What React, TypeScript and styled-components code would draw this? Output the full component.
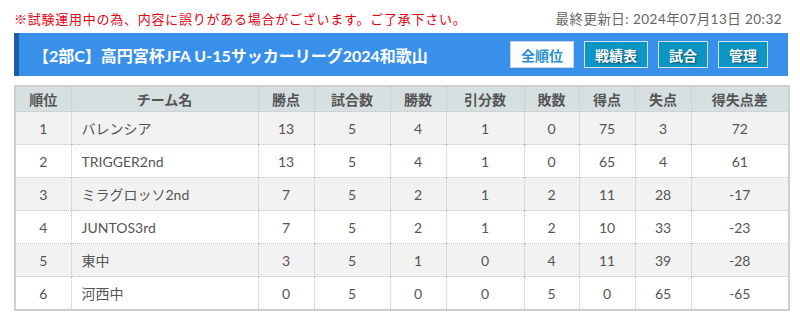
import React from "react";
import styled, { createGlobalStyle } from "styled-components";

const Global = createGlobalStyle`
  html, body { margin: 0; padding: 0; background: #fff; }
  body { font-family: Lato, "Noto Sans CJK JP", sans-serif; }
`;

const Page = styled.div`
  width: 774px;
  margin-left: 14px;
  padding-top: 8px;
`;

const TopLine = styled.div`
  display: flex;
  justify-content: space-between;
  align-items: center;
  height: 20px;
  margin-bottom: 5px;
  font-size: 13px;
`;

const Notice = styled.span`
  color: #e60012;
  letter-spacing: 0.75px;
`;

const Updated = styled.span`
  color: #666;
  font-size: 13.5px;
  margin-right: 6px;
  letter-spacing: 0.45px;
`;

const TitleBar = styled.div`
  display: flex;
  align-items: center;
  justify-content: space-between;
  height: 43px;
  background: #3890eb;
  border-left: 5px solid #1a5ea8;
  padding: 0 20px 0 14px;
  box-sizing: border-box;
`;

const Title = styled.h1`
  margin: 0;
  font-size: 16px;
  font-weight: 700;
  color: #fff;
`;

const Buttons = styled.div`
  display: flex;
  gap: 10px;
`;

const NavButton = styled.div<{ $active?: boolean }>`
  height: 27px;
  padding: 0 10px;
  box-sizing: border-box;
  display: flex;
  align-items: center;
  justify-content: center;
  font-size: 14px;
  font-weight: 700;
  border: 1px solid ${(p) => (p.$active ? "#c9d4de" : "#d5e3ec")};
  background: ${(p) => (p.$active ? "#fff" : "#0c96c6")};
  color: ${(p) => (p.$active ? "#2a8fd0" : "#fff")};
  text-shadow: ${(p) => (p.$active ? "none" : "1px 1px 2px rgba(0,0,0,0.5)")};
`;

const Table = styled.table`
  margin-top: 9px;
  width: 774px;
  border-collapse: collapse;
  border: 2px solid #cfcfcf;
  table-layout: fixed;
  font-size: 14px;
  color: #555;
`;

const Th = styled.th`
  height: 24px;
  background: #d6e0e0;
  font-weight: 700;
  color: #555;
  border-left: 1px dotted #c4c4c4;
  padding: 0;
  &:first-child { border-left: none; }
`;

const Tr = styled.tr<{ $odd: boolean }>`
  background: ${(p) => (p.$odd ? "#f2f2f2" : "#fff")};
`;

const Td = styled.td<{ $left?: boolean }>`
  height: 32px;
  padding: 0 ${(p) => (p.$left ? "10px" : "0")};
  text-align: ${(p) => (p.$left ? "left" : "center")};
  border-left: 1px dotted #c4c4c4;
  border-top: 1px dotted #c4c4c4;
  &:first-child { border-left: none; }
`;

const cols = [56, 187, 56, 76, 56, 78, 55, 56, 56, 98];
const heads = ["順位", "チーム名", "勝点", "試合数", "勝数", "引分数", "敗数", "得点", "失点", "得失点差"];
const rows: (string | number)[][] = [
  [1, "バレンシア", 13, 5, 4, 1, 0, 75, 3, 72],
  [2, "TRIGGER2nd", 13, 5, 4, 1, 0, 65, 4, 61],
  [3, "ミラグロッソ2nd", 7, 5, 2, 1, 2, 11, 28, -17],
  [4, "JUNTOS3rd", 7, 5, 2, 1, 2, 10, 33, -23],
  [5, "東中", 3, 5, 1, 0, 4, 11, 39, -28],
  [6, "河西中", 0, 5, 0, 0, 5, 0, 65, -65],
];

export default function App() {
  return (
    <Page>
      <Global />
      <TopLine>
        <Notice>※試験運用中の為、内容に誤りがある場合がございます。ご了承下さい。</Notice>
        <Updated>最終更新日: 2024年07月13日 20:32</Updated>
      </TopLine>
      <TitleBar>
        <Title>【2部C】高円宮杯JFA U-15サッカーリーグ2024和歌山</Title>
        <Buttons>
          <NavButton $active>全順位</NavButton>
          <NavButton>戦績表</NavButton>
          <NavButton>試合</NavButton>
          <NavButton>管理</NavButton>
        </Buttons>
      </TitleBar>
      <Table>
        <colgroup>
          {cols.map((w, i) => (
            <col key={i} style={{ width: w }} />
          ))}
        </colgroup>
        <thead>
          <tr>
            {heads.map((h) => (
              <Th key={h}>{h}</Th>
            ))}
          </tr>
        </thead>
        <tbody>
          {rows.map((r, i) => (
            <Tr key={i} $odd={i % 2 === 0}>
              {r.map((c, j) => (
                <Td key={j} $left={j === 1}>
                  {c}
                </Td>
              ))}
            </Tr>
          ))}
        </tbody>
      </Table>
    </Page>
  );
}
